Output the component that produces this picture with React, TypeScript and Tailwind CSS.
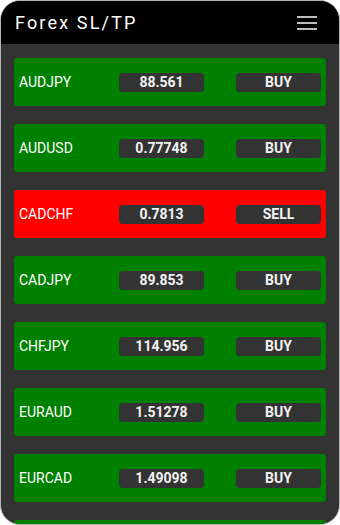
import { Menu } from "lucide-react"

type Quote = {
    pair: string;
    price: string;
    signal: "BUY" | "SELL";
}

const quotes: Quote[] = [
    { pair: "AUDJPY", price: "88.561", signal: "BUY" },
    { pair: "AUDUSD", price: "0.77748", signal: "BUY" },
    { pair: "CADCHF", price: "0.7813", signal: "SELL" },
    { pair: "CADJPY", price: "89.853", signal: "BUY" },
    { pair: "CHFJPY", price: "114.956", signal: "BUY" },
    { pair: "EURAUD", price: "1.51278", signal: "BUY" },
    { pair: "EURCAD", price: "1.49098", signal: "BUY" },
    { pair: "EURCHF", price: "1.08460", signal: "BUY" },
]

const App = () => {
    return (
        <div className="w-[340px] h-[525px] bg-white" style={{ fontFamily: "Roboto, 'Liberation Sans', sans-serif" }}>
            <div className="w-full h-full rounded-[20px] border border-[#b5b5b5] overflow-hidden bg-[#333333] flex flex-col">
                <div className="h-[43px] shrink-0 bg-black flex items-center justify-between pl-[14px] pr-[22px]">
                    <h1 className="text-white text-[18px] tracking-[0.12em] font-normal leading-none">Forex SL/TP</h1>
                    <div className="flex flex-col gap-[4px]">
                        <span className="block w-[20px] h-[2px] bg-[#bdbdbd]" />
                        <span className="block w-[20px] h-[2px] bg-[#bdbdbd]" />
                        <span className="block w-[20px] h-[2px] bg-[#bdbdbd]" />
                    </div>
                </div>
                <div className="flex flex-col gap-[18px] pt-[14px] px-[13px]">
                    {
                        quotes.map((quote) => {
                            const { pair, price, signal } = quote
                            return (
                                <div
                                    key={pair}
                                    className={`h-[48px] shrink-0 rounded-[3px] flex items-center px-[5px] ${signal === "SELL" ? "bg-[#ff0000]" : "bg-[#008000]"}`}
                                >
                                    <span className="w-[100px] text-white text-[14px]">{pair}</span>
                                    <span className="w-[85px] h-[19px] rounded-[4px] bg-[#333333] text-[#f2f2f2] text-[14px] font-bold flex items-center justify-center">{price}</span>
                                    <span className="ml-auto w-[85px] h-[19px] rounded-[4px] bg-[#333333] text-[#f2f2f2] text-[14px] font-bold flex items-center justify-center">{signal}</span>
                                </div>
                            )
                        })
                    }
                </div>
            </div>
        </div>
    )
}

export default App
